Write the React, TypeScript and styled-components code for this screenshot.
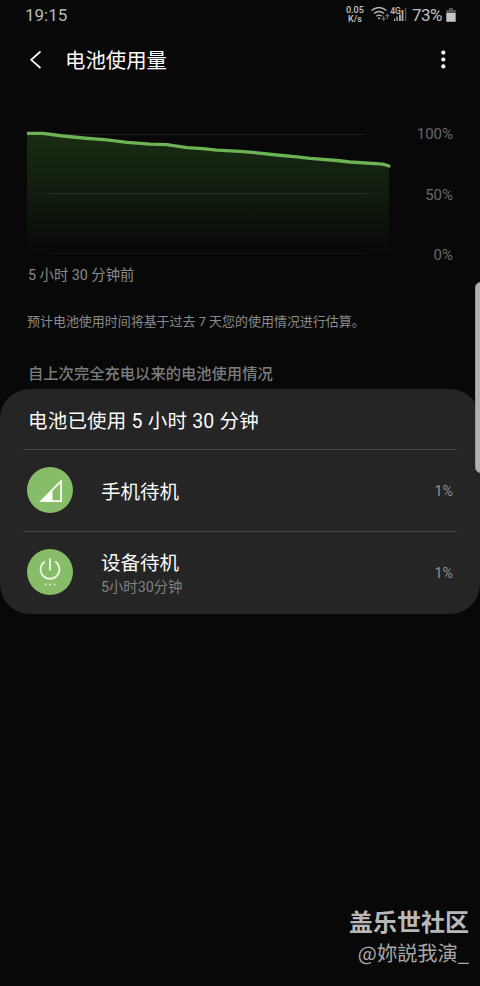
import React from "react";
import styled, { createGlobalStyle } from "styled-components";

const GlobalStyle = createGlobalStyle`
  * { box-sizing: border-box; }
  body { margin: 0; background: #080808; }
`;

const Screen = styled.main`
  position: relative;
  display: flex;
  flex-direction: column;
  width: 480px;
  height: 986px;
  overflow: hidden;
  background: #080808;
  color: #fafafa;
  font-family: Roboto, "Noto Sans CJK SC", sans-serif;
`;

const Text = styled.span<{
  $size: number;
  $color?: string;
  $weight?: number;
  $spacing?: number;
  $line?: number;
}>`
  display: block;
  white-space: nowrap;
  font-size: ${(p) => p.$size}px;
  line-height: ${(p) => p.$line ?? 24}px;
  color: ${(p) => p.$color ?? "#fafafa"};
  font-weight: ${(p) => p.$weight ?? 400};
  letter-spacing: ${(p) => p.$spacing ?? 0}px;
`;

const StatusBar = styled.header`
  display: flex;
  align-items: center;
  justify-content: space-between;
  height: 30px;
  padding: 0 24px 0 25px;
`;

const StatusIcons = styled.div`
  display: flex;
  align-items: center;
`;

const NetSpeed = styled.div`
  width: 20px;
  margin-right: 6px;
  text-align: center;
  font-size: 9px;
  line-height: 9px;
  font-weight: 500;
  color: #c4c4c4;
`;

const Percent = styled.div`
  margin: 0 4px 0 5px;
`;

const TitleBar = styled.div`
  display: flex;
  align-items: center;
  height: 60px;
  padding: 0 33px 0 28px;
`;

const Title = styled.h1`
  flex: 1;
  margin: 2px 0 0 22px;
  font-size: 20.4px;
  line-height: 24px;
  font-weight: 400;
`;

const Chart = styled.section`
  display: flex;
  justify-content: space-between;
  height: 173px;
  padding: 32px 27px 0 27px;
`;

const Plot = styled.svg`
  display: block;
  flex: none;
`;

const Axis = styled.div`
  display: flex;
  flex: none;
  flex-direction: column;
  justify-content: space-between;
  align-items: flex-end;
  height: 145px;
`;

const Captions = styled.section`
  display: flex;
  flex-direction: column;
  height: 126px;
  padding: 0 28px;
`;

const Forecast = styled.div`
  margin: 23px 0 0 -1px;
`;

const SectionTitle = styled.div`
  margin-top: 28px;
`;

const Card = styled.section`
  height: 225px;
  padding: 0 23px;
  border-radius: 30px;
  background: #252525;
`;

const CardHeader = styled.div`
  display: flex;
  align-items: center;
  height: 60px;
  padding: 5px 5px 0;
`;

const Row = styled.div`
  display: flex;
  align-items: center;
  height: 82px;
  padding: 0 4px;
  border-top: 1px solid #484848;
`;

const IconDisc = styled.div`
  display: flex;
  flex: none;
  width: 46px;
  height: 46px;
  margin: -1px 28px 0 0;
  border-radius: 50%;
  background: #87bd69;
`;

const Labels = styled.div`
  flex: 1;
  padding-top: 4px;
`;

const EdgeHandle = styled.div`
  position: absolute;
  top: 282px;
  right: -6px;
  width: 11px;
  height: 191px;
  border-radius: 6px;
  background: #b0b0b0;
  border: 1px solid #969696;
`;

const Watermark = styled.footer`
  display: flex;
  flex-direction: column;
  align-items: flex-end;
  margin-top: auto;
  padding: 0 11px 18px 0;
  font-family: "Noto Sans CJK SC", sans-serif;
`;

const CURVE =
  "M27 133.3 L43 133.3 L63 136 L83 138 L107 139.9 L127 142.3 L150 144.2 L167 144.6 L187 147.6 L203 148.6 L217 150.2 L240 151.4 L257 152.8 L277 155 L297 156.8 L310 158.4 L337 160.5 L350 162 L383 164.2 L389 166";

function BatteryPlot() {
  return (
    <Plot width="364" height="136" viewBox="27 122 364 136">
      <defs>
        <linearGradient id="fill" x1="0" y1="133" x2="0" y2="254" gradientUnits="userSpaceOnUse">
          <stop offset="0" stopColor="#192c13" />
          <stop offset="0.5" stopColor="#111c0e" />
          <stop offset="1" stopColor="#080808" />
        </linearGradient>
      </defs>
      <path d={`${CURVE} V254 H27 Z`} fill="url(#fill)" />
      <path d="M50 134.5H366M50 193.5H366" stroke="#fff" strokeOpacity=".09" />
      <path d="M50 253.5H366" stroke="#fff" strokeOpacity=".05" />
      <path d={CURVE} fill="none" stroke="#6bb353" strokeWidth="3.3" strokeLinejoin="round" strokeLinecap="round" />
    </Plot>
  );
}

function WifiIcon() {
  return (
    <svg width="19" height="16" viewBox="0 0 19 16" fill="none" stroke="#b8b8b8">
      <path d="M.5 3.6Q8 -2.6 15.5 3.6M3 6.5Q8 2.5 13 6.5" strokeWidth="1.3" />
      <path d="M5.4 9.2Q8 7 10.6 9.2" strokeWidth="1.3" />
      <circle cx="8" cy="11.2" r="1" fill="#b8b8b8" stroke="none" />
      <path d="M12.6 8.4V13M10.8 11.2L12.6 13.2L14.4 11.2M16.4 12V7.6M14.6 9.4L16.4 7.4L18.2 9.4" stroke="#6c6c6c" strokeWidth="1.1" />
    </svg>
  );
}

function MobileSignal() {
  return (
    <svg width="17" height="20" viewBox="0 -2 17 20">
      <text x="0.2" y="6.6" fontSize="8.6" fontFamily="Roboto" fontWeight="500" fill="#c4c4c4">4G</text>
      <path d="M4 11.4h1.2V14H4zM6.4 9.6h1.4V14H6.4zM9 7.4h1.8V14H9zM11.6 3h1.8v11h-1.8z" fill="#b0b0b0" />
      <path d="M14.9 1h1.4v13h-1.4z" fill="#555" />
    </svg>
  );
}

function BatteryIcon() {
  return (
    <svg width="10" height="14" viewBox="0 0 10 14">
      <path d="M3 0h4v2h2.7v3H.3V2H3z" fill="#555" />
      <path d="M.3 5h9.4v8.8H.3z" fill="#c4c4c4" />
    </svg>
  );
}

function SignalGlyph() {
  return (
    <svg width="46" height="46" viewBox="0 0 46 46">
      <path d="M12 35L35 12V35ZM25.5 33.2H33.2V16.2L25.5 24Z" fill="#fafcf8" fillRule="evenodd" />
    </svg>
  );
}

function PowerGlyph() {
  return (
    <svg width="46" height="46" viewBox="0 0 46 46" fill="none" stroke="#eef8e8" strokeWidth="1.8">
      <path d="M23 9.5V21.5M17.8 12.6A9.4 9.4 0 1 0 28.2 12.6" />
      <path d="M17.8 35.5h1.6M22.3 35.5h1.6M26.8 35.5h1.6" strokeWidth="1.6" />
    </svg>
  );
}

export default function App() {
  return (
    <Screen>
      <GlobalStyle />
      <StatusBar>
        <Text $size={17} $color="#b9b9b9">19:15</Text>
        <StatusIcons>
          <NetSpeed>0.05<br />K/s</NetSpeed>
          <WifiIcon />
          <MobileSignal />
          <Percent>
            <Text $size={17} $color="#c0c0c0" $spacing={-0.5}>73%</Text>
          </Percent>
          <BatteryIcon />
        </StatusIcons>
      </StatusBar>
      <TitleBar>
        <svg width="15" height="20" viewBox="0 0 15 20" fill="none" stroke="#fafafa" strokeWidth="1.7">
          <path d="M12.5 1.5L3.2 9.8L12.5 18" />
        </svg>
        <Title>电池使用量</Title>
        <svg width="8" height="20" viewBox="0 0 8 20" fill="#fafafa">
          <circle cx="4.3" cy="2.6" r="2.1" />
          <circle cx="4.3" cy="9.5" r="2.1" />
          <circle cx="4.3" cy="16.4" r="2.1" />
        </svg>
      </TitleBar>
      <Chart>
        <BatteryPlot />
        <Axis>
          {["100%", "50%", "0%"].map((label) => (
            <Text key={label} $size={15} $color="#686868">{label}</Text>
          ))}
        </Axis>
      </Chart>
      <Captions>
        <Text $size={14.3} $color="#8a8a8a">5 小时 30 分钟前</Text>
        <Forecast>
          <Text $size={13} $color="#8a8a8a" $spacing={-0.04}>预计电池使用时间将基于过去 7 天您的使用情况进行估算。</Text>
        </Forecast>
        <SectionTitle>
          <Text $size={15.3} $color="#7c7c7c" $weight={500}>自上次完全充电以来的电池使用情况</Text>
        </SectionTitle>
      </Captions>
      <Card>
        <CardHeader>
          <Text $size={19.5} $spacing={0.2}>电池已使用 5 小时 30 分钟</Text>
        </CardHeader>
        <Row>
          <IconDisc><SignalGlyph /></IconDisc>
          <Labels><Text $size={19.5}>手机待机</Text></Labels>
          <Text $size={14.3} $color="#929292">1%</Text>
        </Row>
        <Row>
          <IconDisc><PowerGlyph /></IconDisc>
          <Labels>
            <Text $size={19.5} $line={25}>设备待机</Text>
            <Text $size={14.3} $color="#808080" $line={22}>5小时30分钟</Text>
          </Labels>
          <Text $size={14.3} $color="#929292">1%</Text>
        </Row>
      </Card>
      <Watermark>
        <Text $size={24} $color="#b8b8b8" $weight={700} $line={34}>盖乐世社区</Text>
        <Text $size={20.2} $color="#a8a8a8" $line={30}>@妳説我演_</Text>
      </Watermark>
      <EdgeHandle />
    </Screen>
  );
}
